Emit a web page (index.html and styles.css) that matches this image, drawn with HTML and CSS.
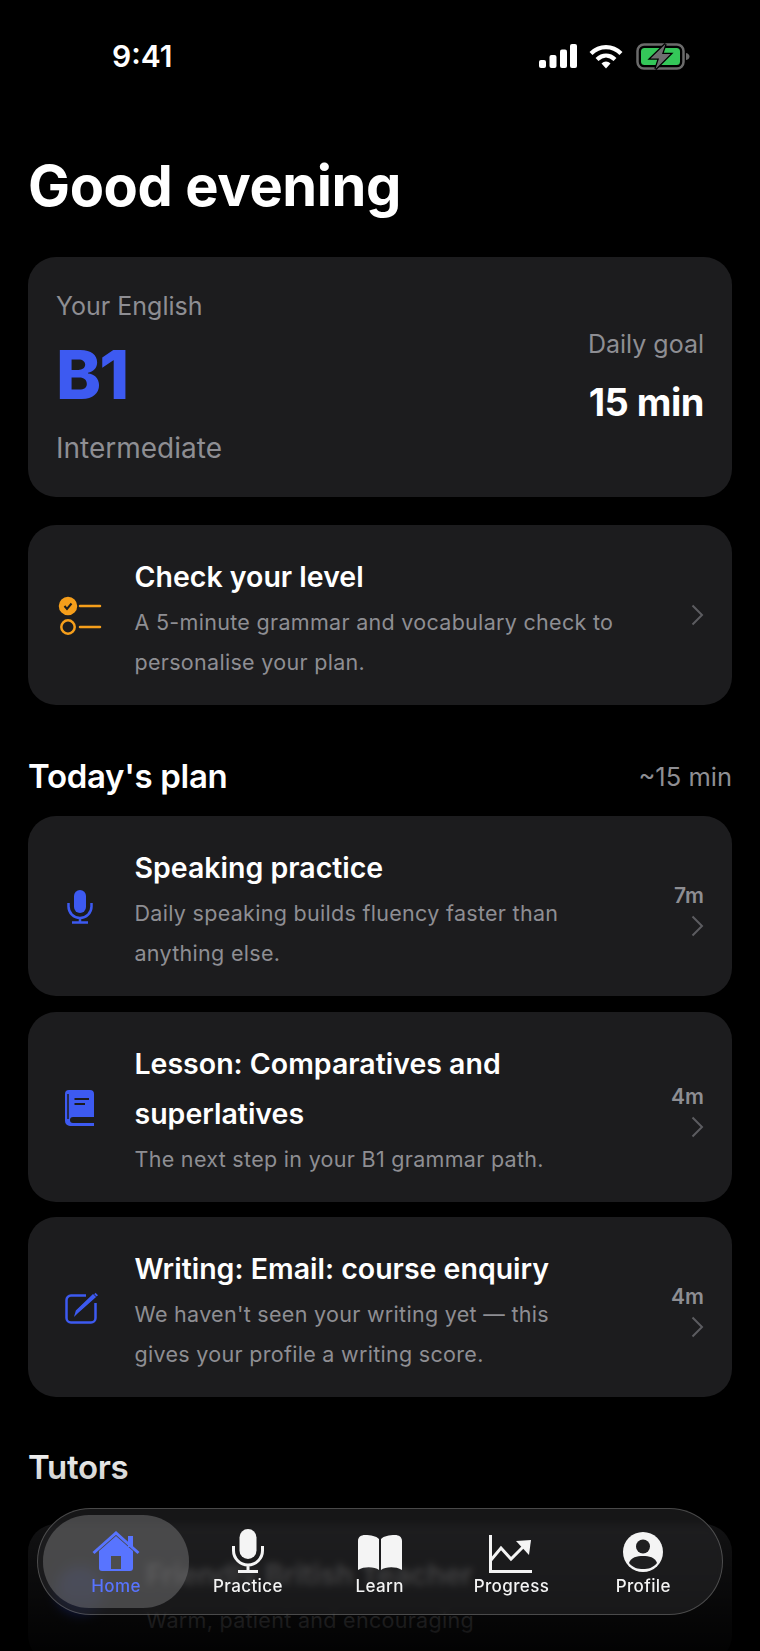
FILE: index.html
```html
<!DOCTYPE html>
<html lang="en">
<head>
  <meta charset="UTF-8">
  <title>Home</title>
  <link rel="stylesheet" href="styles.css">
</head>
<body>
<div class="screen">
  <div class="status">
    <span class="time">9:41</span>
    <div class="status-icons">
      <svg class="signal" width="38" height="24" viewBox="0 0 38 24" fill="#fff">
        <rect x="0" y="16" width="7" height="8" rx="2"/>
        <rect x="10.500" y="11" width="7" height="13" rx="2"/>
        <rect x="21" y="5.500" width="7" height="18.500" rx="2"/>
        <rect x="31" y="0" width="7" height="24" rx="2"/>
      </svg>
      <svg class="wifi" width="34" height="25" viewBox="0 0 34 25" fill="none" stroke="#fff" stroke-width="4.200">
        <path d="M2 9.500C10.500 1 23.500 1 32 9.500"/>
        <path d="M8 15.500C13.500 10.300 20.500 10.300 26 15.500"/>
        <path d="M12.500 19.500L17 24.500L21.500 19.500C19 16.800 15 16.800 12.500 19.500Z" fill="#fff" stroke="none"/>
      </svg>
      <svg width="54" height="27" viewBox="0 0 54 27">
        <rect x="1.500" y="1.500" width="46" height="24" rx="6.500" fill="none" stroke="#6b6b6b" stroke-width="2.500"/>
        <rect x="5" y="5" width="39" height="17" rx="3.500" fill="#34c759"/>
        <path d="M50 10c2.500.5 3.500 2 3.500 3.500s-1 3-3.500 3.500z" fill="#6b6b6b"/>
        <path d="M29.500 1L14.500 15.500H23L19.500 26L34.500 11H26Z" fill="#6e6e70" stroke="#000" stroke-width="2.500" paint-order="stroke"/>
      </svg>
    </div>
  </div>

  <main class="content">
    <h1 class="greeting">Good evening</h1>

    <section class="card level-card">
      <div class="level">
        <div class="level-label">Your English</div>
        <div class="level-code">B1</div>
        <div class="level-name">Intermediate</div>
      </div>
      <div class="goal">
        <div class="goal-label">Daily goal</div>
        <div class="goal-value">15 min</div>
      </div>
    </section>

    <section class="card row check-card">
      <div class="row-icon">
        <svg width="44" height="40" viewBox="0 0 44 40" fill="none" stroke="#f59e1b" stroke-width="2.500">
          <circle cx="10" cy="10" r="8" fill="#f59e1b"/>
          <path d="M6.500 10l2.500 3 4.500-5.500" stroke="#1c1c1e" stroke-width="2"/>
          <circle cx="10" cy="31" r="6.700"/>
          <path d="M22 10h20M22 31h20" stroke-linecap="round"/>
        </svg>
      </div>
      <div class="row-text">
        <div class="row-title">Check your level</div>
        <div class="row-sub">A 5-minute grammar and vocabulary check to personalise your plan.</div>
      </div>
      <svg class="chevron" width="13" height="22" viewBox="0 0 13 22" fill="none" stroke="#5c5c60" stroke-width="2"><path d="M1.500 1.500L11 11L1.500 20.500"/></svg>
    </section>

    <div class="section-head">
      <h2>Today's plan</h2>
      <span class="section-note">~15 min</span>
    </div>

    <div class="plan-list">
      <section class="card row">
        <div class="row-icon">
          <svg width="26" height="34" viewBox="0 0 26 34" fill="none" stroke="#3d5af1" stroke-width="2.500">
            <rect x="7" y="0" width="12" height="23" rx="6" fill="#3d5af1" stroke="none"/>
            <path d="M1.500 13v3.500a11.500 11.500 0 0 0 23 0V13M13 28v4.500M5 32.500h16"/>
          </svg>
        </div>
        <div class="row-text">
          <div class="row-title">Speaking practice</div>
          <div class="row-sub">Daily speaking builds fluency faster than anything else.</div>
        </div>
        <div class="row-meta">
          <span class="duration">7m</span>
          <svg class="chevron" width="13" height="22" viewBox="0 0 13 22" fill="none" stroke="#5c5c60" stroke-width="2"><path d="M1.500 1.500L11 11L1.500 20.500"/></svg>
        </div>
      </section>

      <section class="card row">
        <div class="row-icon">
          <svg width="30" height="36" viewBox="0 0 30 36">
            <path d="M4 0H25a4 4 0 0 1 4 4V27H8a3 3 0 0 0 0 6H29v3H5a5 5 0 0 1-5-5V4a4 4 0 0 1 4-4Z" fill="#3d5af1"/>
            <path d="M3 4V29" stroke="#1c1c1e" stroke-width="1.500"/>
            <path d="M9.500 9H24M9.500 14H20" stroke="#1c1c1e" stroke-width="2"/>
          </svg>
        </div>
        <div class="row-text">
          <div class="row-title">Lesson: Comparatives and superlatives</div>
          <div class="row-sub">The next step in your B1 grammar path.</div>
        </div>
        <div class="row-meta">
          <span class="duration">4m</span>
          <svg class="chevron" width="13" height="22" viewBox="0 0 13 22" fill="none" stroke="#5c5c60" stroke-width="2"><path d="M1.500 1.500L11 11L1.500 20.500"/></svg>
        </div>
      </section>

      <section class="card row">
        <div class="row-icon">
          <svg class="edit-icon" width="34" height="32" viewBox="0 0 34 32" fill="none" stroke="#3d5af1" stroke-width="2.500">
            <path d="M21 3.500H6a4.500 4.500 0 0 0-4.500 4.500V26a4.500 4.500 0 0 0 4.500 4.500H26a4.500 4.500 0 0 0 4.500-4.500V11"/>
            <path d="M12 21L10.500 22.500L11.500 19L28 3L30 5Z" fill="#3d5af1" stroke-width="1.500"/>
            <path d="M30.500 0.800L33 3.200L31.500 4.500L29.200 2.200Z" fill="#3d5af1" stroke="none"/>
          </svg>
        </div>
        <div class="row-text">
          <div class="row-title">Writing: Email: course enquiry</div>
          <div class="row-sub">We haven't seen your writing yet — this gives your profile a writing score.</div>
        </div>
        <div class="row-meta">
          <span class="duration">4m</span>
          <svg class="chevron" width="13" height="22" viewBox="0 0 13 22" fill="none" stroke="#5c5c60" stroke-width="2"><path d="M1.500 1.500L11 11L1.500 20.500"/></svg>
        </div>
      </section>
    </div>

    <div class="section-head tutors-head">
      <h2>Tutors</h2>
    </div>

    <section class="card row tutor-card">
      <div class="avatar"></div>
      <div class="row-text">
        <div class="row-title">Friendly British Teacher</div>
        <div class="row-sub">Warm, patient and encouraging</div>
      </div>
    </section>
  </main>

  <div class="fade"></div>

  <nav class="tabbar">
    <div class="tab active">
      <svg width="48" height="42" viewBox="0 0 48 42">
        <path d="M7 20L24 5L41 20V37a3 3 0 0 1-3 3H10a3 3 0 0 1-3-3Z" fill="#5874ff"/>
        <rect x="19" y="25" width="10" height="13" fill="#4d4d4f"/>
        <path d="M1.500 22L24 2L46.500 22" fill="none" stroke="#5874ff" stroke-width="3"/>
        <rect x="36" y="5" width="5" height="11" fill="#5874ff"/>
      </svg>
      <span>Home</span>
    </div>
    <div class="tab">
      <svg width="32" height="44" viewBox="0 0 32 44" fill="none" stroke="#f4f4f4" stroke-width="3">
        <rect x="7.500" y="0" width="17" height="30" rx="8.500" fill="#f4f4f4" stroke="none"/>
        <path d="M1.500 17v4.500a14.500 14.500 0 0 0 29 0V17M16 36v6M6 42.500h20"/>
      </svg>
      <span>Practice</span>
    </div>
    <div class="tab">
      <svg width="46" height="38" viewBox="0 0 46 38" fill="#f4f4f4">
        <path d="M1 6C1 2 4 0 8 0C14 0 19 1 22 4V35C18 32 8 31 1 35Z"/>
        <path d="M45 6C45 2 42 0 38 0C32 0 27 1 24 4V35C28 32 38 31 45 35Z"/>
      </svg>
      <span>Learn</span>
    </div>
    <div class="tab">
      <svg width="44" height="38" viewBox="0 0 44 38" fill="none" stroke="#f4f4f4" stroke-width="3">
        <path d="M1.500 0V36.500H43"/>
        <path d="M2 25L12 13L22 24L36 10"/>
        <path d="M27 6L42 5L40 20Z" fill="#f4f4f4" stroke="none"/>
      </svg>
      <span>Progress</span>
    </div>
    <div class="tab">
      <svg width="42" height="42" viewBox="0 0 42 42">
        <circle cx="21" cy="21" r="20" fill="#f4f4f4"/>
        <circle cx="21" cy="15.500" r="7" fill="#1f1f20"/>
        <path d="M7 32C9 26 15 25 21 25S33 26 35 32C31 37 26 38 21 38S11 37 7 32Z" fill="#1f1f20"/>
      </svg>
      <span>Profile</span>
    </div>
  </nav>
</div>
</body>
</html>
```

FILE: styles.css
```css
* {
  box-sizing: border-box;
}

html, body {
  margin: 0;
  padding: 0;
  background: #000;
}

body {
  font-family: 'Inter', 'Liberation Sans', sans-serif;
  color: #fff;
}

.screen {
  position: relative;
  width: 760px;
  height: 1651px;
  overflow: hidden;
  background: #000;
}

.status {
  height: 110px;
  padding: 41px 70px 0 112px;
  display: flex;
  justify-content: space-between;
  align-items: flex-start;
}

.time {
  font-size: 30px;
  font-weight: 600;
  line-height: 30px;
}

.status-icons {
  display: flex;
  align-items: center;
  gap: 11px;
  height: 30px;
}

.signal {
  margin-right: 1px;
}

.wifi {
  margin-right: 2px;
}

.content {
  padding: 0 28px;
}

.greeting {
  margin: 44px 0 39px;
  font-size: 56px;
  line-height: 64px;
  font-weight: 700;
  letter-spacing: -0.4px;
}

.card {
  background: #1c1c1e;
  border-radius: 28px;
}

.level-card {
  height: 240px;
  padding: 0 28px;
  display: flex;
  justify-content: space-between;
  align-items: center;
}

.level {
  padding-bottom: 2px;
}

.level-label {
  font-size: 25px;
  line-height: 38px;
  color: #8e8e93;
}

.level-code {
  margin: 7px 0 14px;
  font-size: 68px;
  line-height: 84px;
  font-weight: 800;
  color: #3d5af1;
  letter-spacing: -2px;
}

.level-name {
  font-size: 28px;
  line-height: 36px;
  color: #8e8e93;
}

.goal {
  padding-bottom: 2px;
  text-align: right;
}

.goal-label {
  font-size: 25px;
  line-height: 36px;
  color: #8e8e93;
}

.goal-value {
  margin-top: 16px;
  font-size: 38px;
  line-height: 48px;
  font-weight: 700;
  letter-spacing: -0.5px;
}

.row {
  display: flex;
  align-items: center;
  padding: 27px 28px 23px;
  gap: 30px;
}

.check-card {
  margin-top: 28px;
}

.row-icon {
  flex: 0 0 48.5px;
  margin-top: -2px;
  display: flex;
  justify-content: center;
}

.edit-icon {
  flex: none;
  margin-left: 3px;
}

.row-text {
  flex: 1;
  min-width: 0;
}

.row-title {
  font-size: 28.5px;
  line-height: 50px;
  font-weight: 600;
}

.row-sub {
  font-size: 21.5px;
  line-height: 40px;
  color: #8e8e93;
  letter-spacing: 0.3px;
}

.chevron {
  flex: none;
}

.check-card > .chevron {
  margin-top: -4px;
}

.section-head {
  margin: 49px 0 18px;
  display: flex;
  justify-content: space-between;
  align-items: center;
}

.section-head h2 {
  margin: 0;
  font-size: 33px;
  line-height: 44px;
  font-weight: 600;
  letter-spacing: -0.3px;
}

.section-note {
  font-size: 25.5px;
  color: #8e8e93;
}

.plan-list {
  display: flex;
  flex-direction: column;
  gap: 15.5px;
}

.row-meta {
  flex: 0 0 79px;
  margin-top: 4px;
  display: flex;
  flex-direction: column;
  align-items: flex-end;
  gap: 6px;
}

.duration {
  font-size: 21px;
  line-height: 26px;
  font-weight: 600;
  color: #8e8e93;
}

.tutors-head {
  margin: 48px 0 35px;
}

.tutor-card {
  align-items: flex-start;
  padding-top: 26px;
}

.avatar {
  flex: none;
  width: 48px;
  height: 48px;
  margin: 17px 12px 0 0;
  border-radius: 50%;
  background: #3d5af1;
  filter: blur(6px);
}

.fade {
  position: absolute;
  left: 0;
  right: 0;
  bottom: 0;
  height: 211px;
  background: linear-gradient(to bottom, rgba(0, 0, 0, 0), rgba(0, 0, 0, 0.4) 43%, rgba(0, 0, 0, 0.8) 86%, rgba(0, 0, 0, 0.9));
}

.tabbar {
  position: absolute;
  left: 37px;
  top: 1508px;
  width: 686px;
  height: 107px;
  padding: 6px 12px;
  border-radius: 54px;
  border: 1.5px solid rgba(255, 255, 255, 0.22);
  background: rgba(38, 38, 40, 0.58);
  backdrop-filter: blur(3.5px);
  display: flex;
}

.tab {
  flex: 0 0 131.8px;
  display: flex;
  flex-direction: column;
  align-items: center;
  justify-content: flex-end;
  gap: 3px;
  padding-bottom: 12px;
  font-size: 17px;
  line-height: 20px;
  font-weight: 500;
  letter-spacing: 0.4px;
  color: #f4f4f4;
  border-radius: 46px;
}

.tab svg {
  flex: none;
}

.tab.active {
  flex: 0 0 146px;
  margin: 0 -7px;
  color: #5874ff;
  background: rgba(118, 118, 120, 0.5);
}
```
